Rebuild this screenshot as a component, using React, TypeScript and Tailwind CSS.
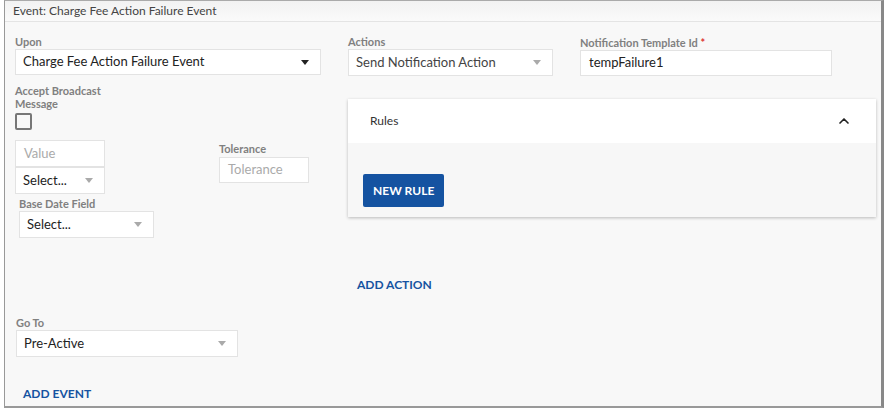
import { ChevronUp } from 'lucide-react';

const font = { fontFamily: 'Lato, "Noto Sans", sans-serif' };

function Label({ children, className = '' }: { children: React.ReactNode; className?: string }) {
  return <div className={`text-[11px] font-bold leading-[13px] text-[#808080] ${className}`}>{children}</div>;
}

function Caret({ dark }: { dark?: boolean }) {
  return (
    <svg width="8" height="5" viewBox="0 0 8 5" className="shrink-0">
      <path d="M0 0h8L4 5z" fill={dark ? '#222' : '#aaa'} />
    </svg>
  );
}

function SelectBox({
  value,
  dark,
  className = '',
  textClass = 'text-[#222]',
}: {
  value: string;
  dark?: boolean;
  className?: string;
  textClass?: string;
}) {
  return (
    <div
      className={`flex items-center justify-between border border-[#e3e3e3] bg-white pl-[7px] pr-[11px] text-[13px] ${textClass} ${className}`}
    >
      <span>{value}</span>
      <Caret dark={dark} />
    </div>
  );
}

function InputBox({ value, placeholder, className = '' }: { value?: string; placeholder?: string; className?: string }) {
  return (
    <div className={`flex items-center border border-[#e3e3e3] bg-white pl-[8px] text-[13px] ${className}`}>
      {value ? <span className="text-[#222]">{value}</span> : <span className="text-[#aaa]">{placeholder}</span>}
    </div>
  );
}

export default function App() {
  return (
    <div className="h-[408px] w-[884px] bg-white pl-[4px]" style={font}>
      <div className="flex h-full flex-col border-t border-b-2 border-l border-r-[3px] border-t-[#aaa] border-b-[#999] border-l-[#999] border-r-[#888] bg-[#f8f8f8]">
        {/* header */}
        <div className="flex h-[21px] shrink-0 items-center border-b border-[#e4e4e4] bg-gradient-to-b from-[#f2f2f2] to-[#fafafa] pl-[8px] text-[12px] text-[#444]">
          Event: Charge Fee Action Failure Event
        </div>

        <div className="flex flex-1 flex-col">
          <div className="flex">
            {/* left column */}
            <div className="w-[343px] shrink-0 pl-[10px] pt-[13px]">
              <Label>Upon</Label>
              <SelectBox value="Charge Fee Action Failure Event" dark className="mt-[1px] h-[26px] w-[306px]" />

              <Label className="mt-[9px]">
                Accept Broadcast
                <br />
                Message
              </Label>
              <div className="mt-[3px] h-[17px] w-[17px] rounded-[2px] border-2 border-[#777]" />

              <div className="mt-[10px] flex">
                <div className="flex w-[90px] flex-col">
                  <InputBox placeholder="Value" className="h-[27px]" />
                  <SelectBox value="Select..." className="h-[27px]" />
                </div>
                <div className="ml-[114px] pt-[2px]">
                  <Label>Tolerance</Label>
                  <InputBox placeholder="Tolerance" className="mt-[2px] h-[26px] w-[90px]" />
                </div>
              </div>

              <div className="pl-[4px] pt-[3px]">
                <Label>Base Date Field</Label>
                <SelectBox value="Select..." className="mt-[1px] h-[27px] w-[135px]" />
              </div>
            </div>

            {/* right column */}
            <div className="flex-1 pr-[5px] pt-[13px]">
              <div className="flex">
                <div>
                  <Label>Actions</Label>
                  <SelectBox
                    value="Send Notification Action"
                    textClass="text-[#444]"
                    className="mt-[1px] h-[27px] w-[205px]"
                  />
                </div>
                <div className="ml-[27px] pt-[1px]">
                  <Label>
                    Notification Template Id <span className="text-[#d33]">*</span>
                  </Label>
                  <InputBox value="tempFailure1" className="mt-[1px] h-[26px] w-[252px]" />
                </div>
              </div>

              <div className="mt-[23px] bg-[#f7f7f7] shadow-[0_1px_3px_rgba(0,0,0,0.25)]">
                <div className="flex h-[44px] items-center justify-between bg-white pl-[22px] pr-[24px] text-[12px] text-[#333]">
                  <span>Rules</span>
                  <ChevronUp size={16} strokeWidth={2.5} color="#222" />
                </div>
                <div className="h-[74px] pl-[15px] pt-[31px]">
                  <button className="h-[33px] rounded-[2px] bg-[#1553a1] px-[10px] text-[12px] font-bold text-white">
                    NEW RULE
                  </button>
                </div>
              </div>

              <div className="mt-[59px] pl-[9px] text-[12px] font-bold text-[#1553a1]">ADD ACTION</div>
            </div>
          </div>

          <div className="pl-[11px] pt-[22px]">
            <Label>Go To</Label>
            <SelectBox value="Pre-Active" className="mt-[1px] h-[27px] w-[222px]" />
          </div>

          <div className="pl-[18px] pt-[28px] text-[12px] font-bold text-[#1553a1]">ADD EVENT</div>
        </div>
      </div>
    </div>
  );
}
